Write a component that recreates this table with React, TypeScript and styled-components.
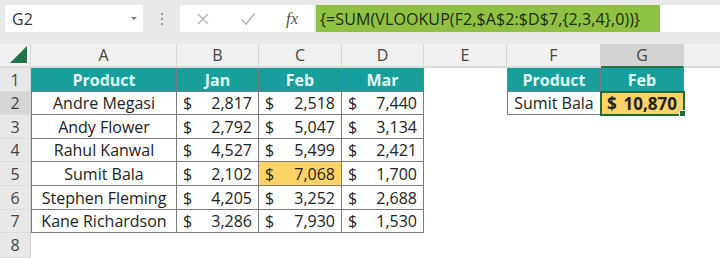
import React from "react";
import styled, { createGlobalStyle } from "styled-components";

const GlobalStyle = createGlobalStyle`
  html, body { margin: 0; padding: 0; background: #ffffff; overflow: hidden; }
  body { font-family: "Open Sans", "Liberation Sans", sans-serif; }
`;

const Page = styled.div`
  width: 720px;
  height: 258px;
  overflow: hidden;
  background: #ffffff;
`;

const TopBar = styled.div`
  height: 44px;
  background: #e9e9e9;
  display: flex;
  align-items: flex-start;
  padding-top: 5px;
  box-sizing: border-box;
`;

const NameBox = styled.div`
  margin-left: 5px;
  width: 138px;
  height: 27px;
  background: #ffffff;
  display: flex;
  align-items: center;
  justify-content: space-between;
  padding: 0 6px 0 7px;
  box-sizing: border-box;
  font-size: 16px;
  color: #333;
`;

const Caret = styled.span`
  width: 0;
  height: 0;
  border-left: 3px solid transparent;
  border-right: 3px solid transparent;
  border-top: 3px solid #777;
`;

const Dots = styled.div`
  width: 37px;
  height: 27px;
  display: flex;
  flex-direction: column;
  align-items: center;
  justify-content: center;
  gap: 3px;
  span {
    width: 2px;
    height: 2px;
    background: #9a9a9a;
  }
`;

const FormulaArea = styled.div`
  flex: 1;
  height: 27px;
  display: flex;
  align-items: center;
  gap: 2px;
`;

const ButtonsBox = styled.div`
  width: 134px;
  height: 27px;
  background: #ffffff;
  display: flex;
  align-items: center;
  padding-left: 16px;
  box-sizing: border-box;
  gap: 30px;
`;

const Fx = styled.span`
  font-family: "Liberation Serif", serif;
  font-style: italic;
  font-size: 17px;
  color: #555;
`;

const FormulaInput = styled.div`
  flex: 1;
  height: 27px;
  background: #ffffff;
  display: flex;
  align-items: center;
`;

const FormulaText = styled.div`
  width: 344px;
  height: 27px;
  background: #8fc242;
  display: flex;
  align-items: center;
  padding-left: 4px;
  box-sizing: border-box;
  font-size: 16px;
  color: #1f2a10;
  white-space: nowrap;
  letter-spacing: 0.1px;
`;

const Grid = styled.div`
  height: 214px;
  display: grid;
  grid-template-columns: 31px 146px 82px 83px 82px 83px 94px 83px 1fr;
  grid-template-rows: 24px 24px 23px 24px 23px 24px 24px 23px 25px;
  font-size: 16px;
  color: #222;
`;

const ColHead = styled.div<{ $active?: boolean; $last?: boolean }>`
  background: ${(p) => (p.$active ? "#d3d3d3" : "#f1f1f1")};
  border-right: ${(p) => (p.$last ? "none" : "1px solid #d6d6d6")};
  border-bottom: 2px solid ${(p) => (p.$active ? "#217346" : "#dadada")};
  display: flex;
  align-items: center;
  justify-content: center;
  color: #444;
  font-size: 16px;
  box-sizing: border-box;
`;

const Corner = styled.div`
  background: #f1f1f1;
  border-right: 1px solid #d6d6d6;
  border-bottom: 2px solid #dadada;
  display: flex;
  align-items: flex-end;
  justify-content: flex-end;
  padding: 0 3px 3px 0;
  box-sizing: border-box;
`;

const RowHead = styled.div<{ $active?: boolean }>`
  background: ${(p) => (p.$active ? "#d6d6d6" : "#e8e8e8")};
  border-bottom: 1px solid #dcdcdc;
  border-right: 1px solid #cfcfcf;
  display: flex;
  align-items: center;
  justify-content: center;
  color: #444;
  font-size: 16px;
  box-sizing: border-box;
`;

const Cell = styled.div<{
  $head?: boolean;
  $hl?: boolean;
  $border?: boolean;
  $bold?: boolean;
  $selected?: boolean;
}>`
  position: relative;
  box-sizing: border-box;
  display: flex;
  align-items: center;
  justify-content: center;
  padding: 0 6px;
  white-space: nowrap;
  background: ${(p) => (p.$head ? "#169f9b" : p.$hl ? "#fcd364" : "#ffffff")};
  color: ${(p) => (p.$head ? "#e4fbfb" : "#222")};
  font-weight: ${(p) => (p.$head || p.$bold ? 700 : 400)};
  font-size: ${(p) => (p.$bold ? "17px" : "16px")};
  border-right: ${(p) => (p.$border ? "1px solid #7b7b7b" : "none")};
  border-bottom: ${(p) => (p.$border ? "1px solid #7b7b7b" : "none")};
  ${(p) => (p.$selected ? "outline: 2px solid #1e6b3a; outline-offset: -1px; z-index: 1;" : "")}
`;

const LeftEdge = styled(Cell)`
  border-left: 1px solid #7b7b7b;
`;

const Money = styled.div`
  width: 100%;
  display: flex;
  justify-content: space-between;
`;

const Handle = styled.span`
  position: absolute;
  right: -3px;
  bottom: -3px;
  width: 5px;
  height: 5px;
  background: #1e6b3a;
  border: 1px solid #fff;
`;

type Row = { name: string; jan: string; feb: string; mar: string };

const rows: Row[] = [
  { name: "Andre Megasi", jan: "2,817", feb: "2,518", mar: "7,440" },
  { name: "Andy Flower", jan: "2,792", feb: "5,047", mar: "3,134" },
  { name: "Rahul Kanwal", jan: "4,527", feb: "5,499", mar: "2,421" },
  { name: "Sumit Bala", jan: "2,102", feb: "7,068", mar: "1,700" },
  { name: "Stephen Fleming", jan: "4,205", feb: "3,252", mar: "2,688" },
  { name: "Kane Richardson", jan: "3,286", feb: "7,930", mar: "1,530" },
];

const cols = ["A", "B", "C", "D", "E", "F", "G"];

const Dollar = ({ v }: { v: string }) => (
  <Money>
    <span>$</span>
    <span>{v}</span>
  </Money>
);

const App: React.FC = () => {
  return (
    <Page>
      <GlobalStyle />
      <TopBar>
        <NameBox>
          <span>G2</span>
          <Caret />
        </NameBox>
        <Dots>
          <span />
          <span />
          <span />
        </Dots>
        <FormulaArea>
          <ButtonsBox>
            <svg width="14" height="14" viewBox="0 0 14 14">
              <path d="M2 2 L12 12 M12 2 L2 12" stroke="#b9b9b9" strokeWidth="1.6" />
            </svg>
            <svg width="16" height="14" viewBox="0 0 16 14">
              <path d="M1.5 7.5 L6 12 L14.5 1.5" stroke="#b9b9b9" strokeWidth="1.6" fill="none" />
            </svg>
            <Fx>fx</Fx>
          </ButtonsBox>
          <FormulaInput>
            <FormulaText>{"{=SUM(VLOOKUP(F2,$A$2:$D$7,{2,3,4},0))}"}</FormulaText>
          </FormulaInput>
        </FormulaArea>
      </TopBar>
      <Grid>
        <Corner>
          <svg width="17" height="17" viewBox="0 0 17 17">
            <polygon points="17,0 17,17 0,17" fill="#217346" />
          </svg>
        </Corner>
        {cols.map((c) => (
          <ColHead key={c} $active={c === "G"}>
            {c}
          </ColHead>
        ))}
        <ColHead $last />

        <RowHead>1</RowHead>
        <LeftEdge $head $border>Product</LeftEdge>
        <Cell $head $border>Jan</Cell>
        <Cell $head $border>Feb</Cell>
        <Cell $head $border>Mar</Cell>
        <Cell />
        <LeftEdge $head $border>Product</LeftEdge>
        <Cell $head $border>Feb</Cell>
        <Cell />

        {rows.map((r, i) => (
          <React.Fragment key={r.name}>
            <RowHead $active={i === 0}>{i + 2}</RowHead>
            <LeftEdge $border>{r.name}</LeftEdge>
            <Cell $border>
              <Dollar v={r.jan} />
            </Cell>
            <Cell $border $hl={i === 3}>
              <Dollar v={r.feb} />
            </Cell>
            <Cell $border>
              <Dollar v={r.mar} />
            </Cell>
            <Cell />
            {i === 0 ? (
              <>
                <LeftEdge $border>Sumit Bala</LeftEdge>
                <Cell $border $hl $bold $selected>
                  <Dollar v="10,870" />
                  <Handle />
                </Cell>
              </>
            ) : (
              <>
                <Cell />
                <Cell />
              </>
            )}
            <Cell />
          </React.Fragment>
        ))}

        <RowHead>8</RowHead>
        {Array.from({ length: 8 }).map((_, k) => (
          <Cell key={k} />
        ))}
      </Grid>
    </Page>
  );
};

export default App;
